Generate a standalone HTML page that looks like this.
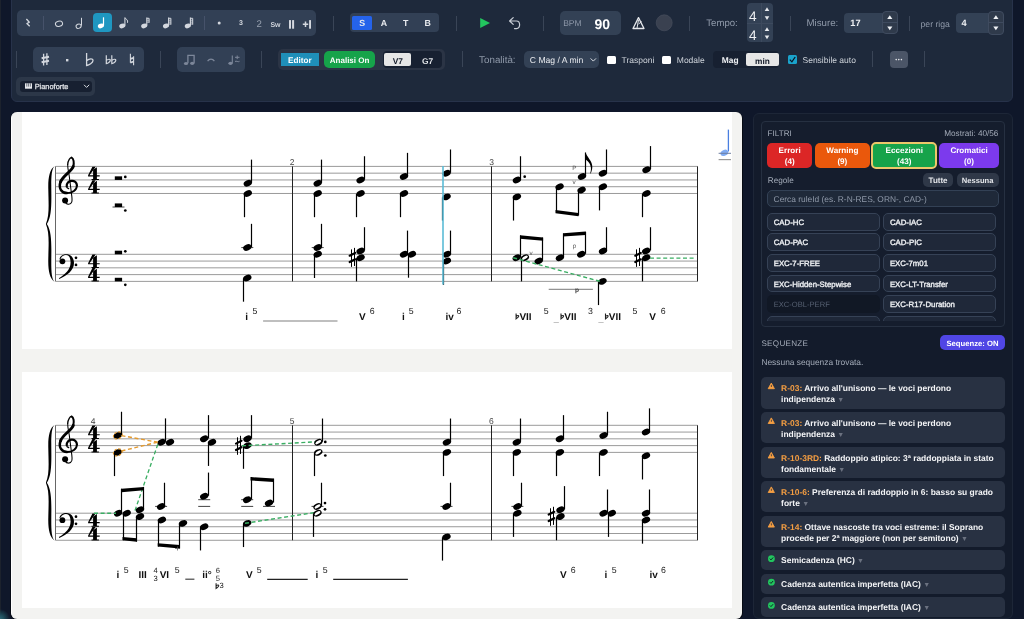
<!DOCTYPE html>
<html><head><meta charset="utf-8"><style>
html,body{margin:0;padding:0;}
body{width:1024px;height:619px;overflow:hidden;background:#0f172a;position:relative;font-family:"Liberation Sans",sans-serif;text-rendering:geometricPrecision;}
</style></head><body>
<div style="position:absolute;left:0;top:0;width:1024px;height:619px;will-change:transform">
<div style="position:absolute;left:0;top:0;width:1px;height:619px;background:#1c222d"></div><div style="position:absolute;left:0;top:606px;width:12px;height:13px;background:radial-gradient(circle at 0% 100%, #2d6878 0px, #1f4c5a 4px, rgba(15,23,42,0) 10px)"></div>
<div style="position:absolute;left:11px;top:-8px;width:1002px;height:109.8px;background:#1e293b;border-radius:6px;border:1px solid #27324a;box-sizing:border-box"></div><div style="position:absolute;left:16.5px;top:9.6px;width:299.5px;height:26.9px;background:#324055;border-radius:5px;"></div><div style="position:absolute;left:43.0px;top:16.3px;width:1px;height:13.3px;background:#46526a"></div><div style="position:absolute;left:203.8px;top:16.3px;width:1px;height:13.3px;background:#46526a"></div><div style="position:absolute;left:93px;top:13.3px;width:19px;height:19.2px;background:#1f97c1;border-radius:4px;"></div><svg style="position:absolute;left:0;top:0" width="320" height="40"><path d="M26.4,19 L29.3,22.2 L26.9,23.6 L29.7,26.2" fill="none" stroke="#d3d7de" stroke-width="1.3" stroke-linejoin="round"/><ellipse cx="59" cy="23.7" rx="3.6" ry="2.6" transform="rotate(-15 59 23.7)" fill="none" stroke="#d3d7de" stroke-width="1.1"/><ellipse cx="78.6" cy="26.2" rx="2.6" ry="2.1" transform="rotate(-25 78.6 26.2)" fill="none" stroke="#d3d7de" stroke-width="1"/><line x1="81.5" y1="17.8" x2="81.5" y2="25.6" stroke="#d3d7de" stroke-width="1"/><ellipse cx="100.9" cy="25.9" rx="3.1" ry="2.3" transform="rotate(-20 100.9 25.9)" fill="#ffffff"/><line x1="103.5" y1="17.3" x2="103.5" y2="25.5" stroke="#ffffff" stroke-width="1.2"/><ellipse cx="122.3" cy="25.9" rx="3.1" ry="2.3" transform="rotate(-20 122.3 25.9)" fill="#d3d7de"/><line x1="124.89999999999999" y1="17.5" x2="124.89999999999999" y2="25.5" stroke="#d3d7de" stroke-width="1.1"/><path d="M124.89999999999999,17.8 C125.89999999999999,19 128.39999999999998,20 127.49999999999999,22.8" fill="none" stroke="#d3d7de" stroke-width="1"/><ellipse cx="144.2" cy="25.9" rx="3.1" ry="2.3" transform="rotate(-20 144.2 25.9)" fill="#d3d7de"/><line x1="146.79999999999998" y1="17.5" x2="146.79999999999998" y2="25.5" stroke="#d3d7de" stroke-width="1.1"/><path d="M146.79999999999998,18.3 L149.1,18.3 L149.1,22.8" fill="none" stroke="#d3d7de" stroke-width="1"/><line x1="146.79999999999998" y1="20.2" x2="149.1" y2="20.2" stroke="#d3d7de" stroke-width="0.8"/><line x1="146.79999999999998" y1="22.1" x2="149.1" y2="22.1" stroke="#d3d7de" stroke-width="0.8"/><ellipse cx="166" cy="25.9" rx="3.1" ry="2.3" transform="rotate(-20 166 25.9)" fill="#d3d7de"/><line x1="168.6" y1="17.5" x2="168.6" y2="25.5" stroke="#d3d7de" stroke-width="1.1"/><path d="M168.6,18.3 L170.9,18.3 L170.9,24.7" fill="none" stroke="#d3d7de" stroke-width="1"/><line x1="168.6" y1="20.2" x2="170.9" y2="20.2" stroke="#d3d7de" stroke-width="0.8"/><line x1="168.6" y1="22.1" x2="170.9" y2="22.1" stroke="#d3d7de" stroke-width="0.8"/><line x1="168.6" y1="24.0" x2="170.9" y2="24.0" stroke="#d3d7de" stroke-width="0.8"/><ellipse cx="187.8" cy="25.9" rx="3.1" ry="2.3" transform="rotate(-20 187.8 25.9)" fill="#d3d7de"/><line x1="190.4" y1="17.5" x2="190.4" y2="25.5" stroke="#d3d7de" stroke-width="1.1"/><path d="M190.4,18.3 L192.70000000000002,18.3 L192.70000000000002,24.7" fill="none" stroke="#d3d7de" stroke-width="1"/><line x1="190.4" y1="20.2" x2="192.70000000000002" y2="20.2" stroke="#d3d7de" stroke-width="0.8"/><line x1="190.4" y1="22.1" x2="192.70000000000002" y2="22.1" stroke="#d3d7de" stroke-width="0.8"/><line x1="190.4" y1="24.0" x2="192.70000000000002" y2="24.0" stroke="#d3d7de" stroke-width="0.8"/><circle cx="219.2" cy="23.1" r="1.5" fill="#d3d7de"/><rect x="289" y="20.1" width="2" height="8.6" fill="#d3d7de"/><rect x="292.1" y="20.1" width="2" height="8.6" fill="#d3d7de"/><path d="M302.8,24.3 h5.4 M305.5,21.6 v5.4" stroke="#d3d7de" stroke-width="1.5"/><rect x="309.1" y="20.1" width="1.9" height="8.6" fill="#d3d7de"/></svg><div style="position:absolute;left:141.00px;top:19.77px;width:200px;line-height:7px;text-align:center;font-size:7px;color:#d3d7de;font-weight:bold;white-space:nowrap;">3</div><div style="position:absolute;left:159.10px;top:19.57px;width:200px;line-height:9.6px;text-align:center;font-size:9.6px;color:#98a1b0;font-weight:normal;white-space:nowrap;">2</div><div style="position:absolute;left:175.50px;top:21.87px;width:200px;line-height:7px;text-align:center;font-size:7px;color:#d3d7de;font-weight:bold;white-space:nowrap;">Sw</div><div style="position:absolute;left:333.0px;top:15.5px;width:1px;height:15.0px;background:#3a4557"></div><div style="position:absolute;left:350.3px;top:13.4px;width:89.19999999999999px;height:18.6px;background:#324055;border-radius:4px;"></div><div style="position:absolute;left:352.1px;top:15.9px;width:20.0px;height:13.999999999999998px;background:#2563eb;border-radius:1.5px;"></div><div style="position:absolute;left:262.10px;top:19.45px;width:200px;line-height:8.8px;text-align:center;font-size:8.8px;color:#e8eaee;font-weight:bold;white-space:nowrap;">S</div><div style="position:absolute;left:284.00px;top:19.45px;width:200px;line-height:8.8px;text-align:center;font-size:8.8px;color:#e8eaee;font-weight:bold;white-space:nowrap;">A</div><div style="position:absolute;left:305.70px;top:19.45px;width:200px;line-height:8.8px;text-align:center;font-size:8.8px;color:#e8eaee;font-weight:bold;white-space:nowrap;">T</div><div style="position:absolute;left:327.60px;top:19.45px;width:200px;line-height:8.8px;text-align:center;font-size:8.8px;color:#e8eaee;font-weight:bold;white-space:nowrap;">B</div><div style="position:absolute;left:456.0px;top:15.5px;width:1px;height:15.0px;background:#3a4557"></div><svg style="position:absolute;left:0;top:0" width="560" height="40"><path d="M480.2,18 L490,23 L480.2,28 Z" fill="#22c55e"/><path d="M513.2,17.6 L509.6,21 L513.2,24.4 M509.8,21 L516.5,21 C520.5,21 520.8,28.6 516.5,28.6 L514.5,28.6" fill="none" stroke="#c9ced6" stroke-width="1.2" stroke-linecap="round" stroke-linejoin="round"/></svg><div style="position:absolute;left:543.0px;top:15.5px;width:1px;height:15.0px;background:#3a4557"></div><div style="position:absolute;left:560.1px;top:11.1px;width:60.69999999999993px;height:23.9px;background:#334155;border-radius:5px;"></div><div style="position:absolute;left:563.20px;top:18.90px;line-height:8.5px;font-size:8.5px;color:#8d97a8;font-weight:normal;white-space:nowrap;">BPM</div><div style="position:absolute;left:594.40px;top:16.85px;line-height:14px;font-size:14px;color:#ffffff;font-weight:bold;white-space:nowrap;">90</div><svg style="position:absolute;left:0;top:0" width="700" height="40"><path d="M638.5,17.6 L644,28.5 L633,28.5 Z" fill="none" stroke="#e6e8ec" stroke-width="1.3" stroke-linejoin="round"/><path d="M638.5,20 L637,28 M638.6,24 L641.5,21.5" stroke="#e6e8ec" stroke-width="1"/><circle cx="664.2" cy="22.8" r="8" fill="#3a4150" stroke="#4a5060" stroke-width="0.6"/></svg><div style="position:absolute;left:688.9px;top:15.5px;width:1px;height:15.0px;background:#3a4557"></div><div style="position:absolute;left:706.30px;top:18.87px;line-height:9.6px;font-size:9.6px;color:#8f99a9;font-weight:normal;white-space:nowrap;">Tempo:</div><div style="position:absolute;left:746.5px;top:3.3px;width:26.5px;height:38.6px;background:#334155;border-radius:4px;"></div><div style="position:absolute;left:760.6px;top:3.3px;width:0.6999999999999318px;height:38.6px;background:#3d4a5e;border-radius:0px;"></div><div style="position:absolute;left:746.5px;top:22.8px;width:26.5px;height:0.6999999999999993px;background:#3d4a5e;border-radius:0px;"></div><div style="position:absolute;left:652.70px;top:9.90px;width:200px;line-height:13.7px;text-align:center;font-size:13.7px;color:#eef0f3;font-weight:normal;white-space:nowrap;">4</div><div style="position:absolute;left:652.70px;top:29.00px;width:200px;line-height:13.7px;text-align:center;font-size:13.7px;color:#eef0f3;font-weight:normal;white-space:nowrap;">4</div><svg style="position:absolute;left:0;top:0" width="1024" height="45"><path d="M764.7,11.100000000000001 L769.3,11.100000000000001 L767,7.300000000000001 Z" fill="#e8eaee"/><path d="M764.7,16.2 L769.3,16.2 L767,20.0 Z" fill="#e8eaee"/><path d="M764.7,31.0 L769.3,31.0 L767,27.2 Z" fill="#e8eaee"/><path d="M764.7,35.400000000000006 L769.3,35.400000000000006 L767,39.2 Z" fill="#e8eaee"/></svg><div style="position:absolute;left:789.5px;top:15.5px;width:1px;height:15.0px;background:#3a4557"></div><div style="position:absolute;left:806.50px;top:18.89px;line-height:9.7px;font-size:9.7px;color:#8f99a9;font-weight:normal;white-space:nowrap;">Misure:</div><div style="position:absolute;left:844.4px;top:13.1px;width:53.60000000000002px;height:19.5px;background:#334155;border-radius:4px;"></div><div style="position:absolute;left:881.8px;top:10.9px;width:16.100000000000023px;height:23.5px;background:#2f3a4b;border-radius:4px;border:0.8px solid #3f4b5f;box-sizing:border-box"></div><div style="position:absolute;left:881.8px;top:22px;width:16.100000000000023px;height:0.8000000000000007px;background:#3f4b5f;border-radius:0px;"></div><div style="position:absolute;left:850.30px;top:19.31px;line-height:9.2px;font-size:9.2px;color:#eef0f3;font-weight:bold;white-space:nowrap;">17</div><div style="position:absolute;left:909.2px;top:15.5px;width:1px;height:15.0px;background:#3a4557"></div><div style="position:absolute;left:920.50px;top:19.74px;line-height:8.7px;font-size:8.7px;color:#8f99a9;font-weight:normal;white-space:nowrap;">per riga</div><div style="position:absolute;left:955.5px;top:13.1px;width:48.5px;height:19.5px;background:#334155;border-radius:4px;"></div><div style="position:absolute;left:988.1px;top:11px;width:15.899999999999977px;height:23.9px;background:#2f3a4b;border-radius:4px;border:0.8px solid #3f4b5f;box-sizing:border-box"></div><div style="position:absolute;left:988.1px;top:22.2px;width:15.899999999999977px;height:0.8000000000000007px;background:#3f4b5f;border-radius:0px;"></div><div style="position:absolute;left:961.60px;top:19.31px;line-height:9.2px;font-size:9.2px;color:#eef0f3;font-weight:bold;white-space:nowrap;">4</div><svg style="position:absolute;left:0;top:0" width="1024" height="45"><path d="M887.1999999999999,19 L892.4,19 L889.8,15.3 Z" fill="#f0f2f5"/><path d="M887.1999999999999,26.6 L892.4,26.6 L889.8,30.3 Z" fill="#f0f2f5"/><path d="M993.3,19 L998.5,19 L995.9,15.3 Z" fill="#f0f2f5"/><path d="M993.3,26.6 L998.5,26.6 L995.9,30.3 Z" fill="#f0f2f5"/></svg><div style="position:absolute;left:15.899999999999999px;top:51px;width:1px;height:17px;background:#3a4557"></div><div style="position:absolute;left:33.1px;top:47px;width:110.70000000000002px;height:24.700000000000003px;background:#324055;border-radius:5px;"></div><div style="position:absolute;left:159.8px;top:51px;width:1px;height:17px;background:#3a4557"></div><div style="position:absolute;left:177.2px;top:47px;width:67.5px;height:24.700000000000003px;background:#324055;border-radius:5px;"></div><svg style="position:absolute;left:0;top:0" width="260" height="80"><path d="M43.6,53.8 V65.6 M46.9,53.2 V65" stroke="#d3d7de" stroke-width="1.3"/><path d="M41.6,58.3 L49,56.8 M41.6,62.2 L49,60.7" stroke="#d3d7de" stroke-width="1.9"/><rect x="66" y="59" width="2.4" height="2.4" fill="#d3d7de"/><path d="M86.6,53 V65.5 C89,65 93,63 93,60.6 C93,58.2 89.5,58.3 86.6,60.8" fill="none" stroke="#d3d7de" stroke-width="1.3"/><path d="M106.3,55.3 V63.6 C107.8,63.4 110.3,62 110.3,60.3 C110.3,58.8 108.1,59 106.3,60.5" fill="none" stroke="#d3d7de" stroke-width="1.2"/><path d="M111.8,55.3 V63.6 C113.3,63.4 115.8,62 115.8,60.3 C115.8,58.8 113.6,59 111.8,60.5" fill="none" stroke="#d3d7de" stroke-width="1.2"/><path d="M130.4,53.8 V62.8 M133.6,56.2 V65.2" stroke="#d3d7de" stroke-width="1.1"/><path d="M130.4,58.9 L133.6,57.8 M130.4,62.6 L133.6,61.5" stroke="#d3d7de" stroke-width="1.8"/><ellipse cx="186" cy="63.5" rx="2.1" ry="1.6" fill="#7d879a"/><ellipse cx="192.2" cy="63.3" rx="2.1" ry="1.6" fill="#7d879a"/><path d="M187.9,63 V55.3 H194.1 V63" fill="none" stroke="#7d879a" stroke-width="1.3"/><path d="M207.6,61.2 C209.5,58.3 212.5,58.3 214.4,61.2" fill="none" stroke="#7d879a" stroke-width="1.2"/><ellipse cx="230.5" cy="63.3" rx="2.1" ry="1.6" fill="#7d879a"/><path d="M232.3,63 V55.5" stroke="#7d879a" stroke-width="1.1"/><path d="M235,57.3 h4.5 M237.2,55.5 v3.6 M235,61.5 C236.3,60.3 238,62.6 239.5,61.3" fill="none" stroke="#7d879a" stroke-width="1"/></svg><div style="position:absolute;left:261.1px;top:51px;width:1px;height:17px;background:#3a4557"></div><div style="position:absolute;left:278.4px;top:48.8px;width:166.5px;height:21.400000000000006px;background:#2b3445;border-radius:5px;"></div><div style="position:absolute;left:280.9px;top:53.1px;width:37.80000000000001px;height:12.999999999999993px;background:#1f8fb9;border-radius:0px;"></div><div style="position:absolute;left:199.80px;top:56.56px;width:200px;line-height:8.2px;text-align:center;font-size:8.2px;color:#ffffff;font-weight:bold;white-space:nowrap;">Editor</div><div style="position:absolute;left:324px;top:50.9px;width:51.10000000000002px;height:16.9px;background:#16a34a;border-radius:5px;"></div><div style="position:absolute;left:249.60px;top:56.83px;width:200px;line-height:8px;text-align:center;font-size:8px;color:#ffffff;font-weight:bold;white-space:nowrap;">Analisi On</div><div style="position:absolute;left:382.5px;top:50.9px;width:59.80000000000001px;height:16.9px;background:#172031;border-radius:4px;"></div><div style="position:absolute;left:384.3px;top:53.2px;width:26.80000000000001px;height:12.799999999999997px;background:#e6e6e6;border-radius:2px;"></div><div style="position:absolute;left:297.80px;top:56.59px;width:200px;line-height:8.4px;text-align:center;font-size:8.4px;color:#111827;font-weight:bold;white-space:nowrap;">V7</div><div style="position:absolute;left:327.60px;top:56.59px;width:200px;line-height:8.4px;text-align:center;font-size:8.4px;color:#e5e7eb;font-weight:bold;white-space:nowrap;">G7</div><div style="position:absolute;left:461.5px;top:51.4px;width:1px;height:15.800000000000004px;background:#3a4557"></div><div style="position:absolute;left:479.10px;top:55.50px;line-height:9.8px;font-size:9.8px;color:#8f99a9;font-weight:normal;white-space:nowrap;">Tonalità:</div><div style="position:absolute;left:523.5px;top:50.9px;width:75.10000000000002px;height:16.9px;background:#334155;border-radius:5px;"></div><div style="position:absolute;left:529.80px;top:55.82px;line-height:8.6px;font-size:8.6px;color:#e9ebef;font-weight:normal;white-space:nowrap;">C Mag / A min</div><div style="position:absolute;left:607px;top:55.6px;width:8.5px;height:8.199999999999996px;background:#ffffff;border-radius:1.5px;"></div><div style="position:absolute;left:621.60px;top:56.40px;line-height:8.5px;font-size:8.5px;color:#cfd4db;font-weight:normal;white-space:nowrap;">Trasponi</div><div style="position:absolute;left:662.4px;top:55.6px;width:8.399999999999977px;height:8.199999999999996px;background:#ffffff;border-radius:1.5px;"></div><div style="position:absolute;left:676.80px;top:56.40px;line-height:8.5px;font-size:8.5px;color:#cfd4db;font-weight:normal;white-space:nowrap;">Modale</div><div style="position:absolute;left:712.5px;top:51px;width:66.79999999999995px;height:16.799999999999997px;background:#172031;border-radius:4px;"></div><div style="position:absolute;left:630.20px;top:56.49px;width:200px;line-height:8.4px;text-align:center;font-size:8.4px;color:#f0f2f5;font-weight:bold;white-space:nowrap;">Mag</div><div style="position:absolute;left:746.1px;top:53px;width:32.89999999999998px;height:12.900000000000006px;background:#e6e6e6;border-radius:2px;"></div><div style="position:absolute;left:662.50px;top:56.57px;width:200px;line-height:8.3px;text-align:center;font-size:8.3px;color:#111827;font-weight:bold;white-space:nowrap;">min</div><div style="position:absolute;left:787.6px;top:55px;width:9.600000000000023px;height:9.200000000000003px;background:#1aa3cc;border-radius:1.5px;"></div><div style="position:absolute;left:802.50px;top:56.40px;line-height:8.5px;font-size:8.5px;color:#cfd4db;font-weight:normal;white-space:nowrap;">Sensibile auto</div><div style="position:absolute;left:872.3px;top:51.4px;width:1px;height:15.800000000000004px;background:#3a4557"></div><div style="position:absolute;left:889.5px;top:51.4px;width:18.5px;height:16.4px;background:#4b5567;border-radius:4px;"></div><div style="position:absolute;left:923.8px;top:51.4px;width:1px;height:15.800000000000004px;background:#3a4557"></div><div style="position:absolute;left:16.4px;top:77px;width:78.4px;height:18.5px;background:#2c3748;border-radius:5px;"></div><div style="position:absolute;left:20px;top:80.6px;width:71.7px;height:11.400000000000006px;background:#172031;border-radius:3px;"></div><div style="position:absolute;left:34.70px;top:83.44px;line-height:7.4px;font-size:7.4px;color:#e5e7eb;font-weight:normal;white-space:nowrap;-webkit-text-stroke:0.25px #e5e7eb">Pianoforte</div><svg style="position:absolute;left:0;top:0" width="1024" height="100"><path d="M590.6,58.4 L593.3,61.1 L596,58.4" fill="none" stroke="#d9dde3" stroke-width="1"/><path d="M84,84.8 L86.6,87.4 L89.2,84.8" fill="none" stroke="#d9dde3" stroke-width="1"/><path d="M789.8,59.7 L791.9,61.9 L795.2,57" fill="none" stroke="#0b1220" stroke-width="1.2"/><circle cx="896.2" cy="59.6" r="0.8" fill="#e5e7eb"/><circle cx="898.8" cy="59.6" r="0.8" fill="#e5e7eb"/><circle cx="901.4" cy="59.6" r="0.8" fill="#e5e7eb"/><rect x="25" y="83.3" width="7" height="5.4" fill="#e5e7eb"/><path d="M26.8,83.3 V86.6 M28.6,83.3 V86.6 M30.4,83.3 V86.6" stroke="#172031" stroke-width="0.6"/></svg>
<div style="position:absolute;left:10px;top:111.5px;width:733px;height:508px;background:#070b14;border-radius:7px"></div><div style="position:absolute;left:11px;top:112px;width:731px;height:507px;background:#f3f3f1;border-radius:6px;border-left:1px solid #ffffff;box-sizing:border-box"></div>
<div style="position:absolute;left:22px;top:112px;width:710px;height:237px;background:#ffffff"></div>
<div style="position:absolute;left:22px;top:371.5px;width:710px;height:236px;background:#ffffff"></div>
<svg style="position:absolute;left:0;top:0;will-change:transform;text-rendering:geometricPrecision" width="1024" height="619" font-family="Liberation Sans, sans-serif"><line x1="55.6" y1="166.40" x2="697.6" y2="166.40" stroke="#9a9a9a" stroke-width="1"/><line x1="55.6" y1="173.17" x2="697.6" y2="173.17" stroke="#9a9a9a" stroke-width="1"/><line x1="55.6" y1="179.94" x2="697.6" y2="179.94" stroke="#9a9a9a" stroke-width="1"/><line x1="55.6" y1="186.71" x2="697.6" y2="186.71" stroke="#9a9a9a" stroke-width="1"/><line x1="55.6" y1="193.48" x2="697.6" y2="193.48" stroke="#9a9a9a" stroke-width="1"/><line x1="55.6" y1="254.30" x2="697.6" y2="254.30" stroke="#9a9a9a" stroke-width="1"/><line x1="55.6" y1="261.07" x2="697.6" y2="261.07" stroke="#9a9a9a" stroke-width="1"/><line x1="55.6" y1="267.84" x2="697.6" y2="267.84" stroke="#9a9a9a" stroke-width="1"/><line x1="55.6" y1="274.61" x2="697.6" y2="274.61" stroke="#9a9a9a" stroke-width="1"/><line x1="55.6" y1="281.38" x2="697.6" y2="281.38" stroke="#9a9a9a" stroke-width="1"/><line x1="55.50" y1="166.40" x2="55.50" y2="281.38" stroke="#666" stroke-width="1"/><path d="M54.7,165.90 C49.5,169.38 48.0,177.50 48.3,189.10 C48.6,204.75 49.5,215.19 45.9,223.89 C49.5,232.59 48.6,243.03 48.3,258.68 C48.0,270.28 49.5,278.40 54.7,281.88 C51.4,278.98 51.2,270.28 51.3,258.68 C51.5,243.03 51.6,230.85 46.9,223.89 C51.6,216.93 51.5,204.75 51.3,189.10 C51.2,177.50 51.4,168.80 54.7,165.90 Z" fill="#000000"/><g transform="translate(0.00,0.00)" fill="none" stroke="#000000" stroke-linecap="round"><path d="M65.3,201.2 C65.6,204.8 70.6,205.4 71.8,201.8 C72.3,200 71.9,196.5 71.5,193.8 L69.3,176.5 C68.8,172.5 67.6,169 67.7,164.5" stroke-width="1.05"/><path d="M67.7,164.5 C67.9,160.5 70.3,157.2 71.6,157.6" stroke-width="1.3"/><path d="M71.6,157.6 C73.6,158.4 74.3,162.5 73.3,166.4" stroke-width="2.0"/><path d="M73.3,166.4 C72,171 62.5,176 60.6,181.8" stroke-width="2.9"/><path d="M60.6,181.8 C59.6,184.5 59.4,187.5 60.8,189.8 C62.2,192 64.5,193.1 67,193.1" stroke-width="2.5"/><path d="M67,193.1 C72.4,193.1 76.9,190.2 76.9,185.5" stroke-width="1.9"/><path d="M76.9,185.5 C76.9,182.3 74.4,180.6 71.6,180.8 C68.6,181 66.5,183.4 66.7,186.3" stroke-width="2.2"/><path d="M66.7,186.3 C66.8,187.6 67.6,188.4 68.6,188.6" stroke-width="1.4"/><circle cx="65.1" cy="200.4" r="3.0" fill="#000000" stroke="none"/></g><g transform="translate(0.00,0.00)"><path d="M59.4,259.4 C60,255.6 63,254.2 66.4,254.2 C71.2,254.2 74,258.2 74,263 C74,270.3 67.2,275.4 59.3,279 L58.9,278.2 C65.3,274.3 70.6,269.4 70.6,262.5 C70.6,258.2 69.2,255.1 66,255.1 C63.6,255.1 61.6,256.3 60.7,258.7 Z" fill="#000000"/><circle cx="62.4" cy="261.3" r="2.9" fill="#000000"/><circle cx="76" cy="257.8" r="1.35" fill="#000000"/><circle cx="76" cy="264.9" r="1.35" fill="#000000"/></g><g transform="translate(88.10,166.65)"><path d="M4.3,0 L7.6,0 L1.4,8.6 L11.6,8.6 L11.6,9.8 L0,9.8 L0,8.7 Z" fill="#000000"/><path d="M5.0,3.2 L8.8,0.6 L8.8,12.4 L10.8,12.4 L10.8,13.4 L3.4,13.4 L3.4,12.4 L5.0,12.4 Z" fill="#000000"/></g><g transform="translate(88.10,180.19)"><path d="M4.3,0 L7.6,0 L1.4,8.6 L11.6,8.6 L11.6,9.8 L0,9.8 L0,8.7 Z" fill="#000000"/><path d="M5.0,3.2 L8.8,0.6 L8.8,12.4 L10.8,12.4 L10.8,13.4 L3.4,13.4 L3.4,12.4 L5.0,12.4 Z" fill="#000000"/></g><g transform="translate(88.10,254.55)"><path d="M4.3,0 L7.6,0 L1.4,8.6 L11.6,8.6 L11.6,9.8 L0,9.8 L0,8.7 Z" fill="#000000"/><path d="M5.0,3.2 L8.8,0.6 L8.8,12.4 L10.8,12.4 L10.8,13.4 L3.4,13.4 L3.4,12.4 L5.0,12.4 Z" fill="#000000"/></g><g transform="translate(88.10,268.09)"><path d="M4.3,0 L7.6,0 L1.4,8.6 L11.6,8.6 L11.6,9.8 L0,9.8 L0,8.7 Z" fill="#000000"/><path d="M5.0,3.2 L8.8,0.6 L8.8,12.4 L10.8,12.4 L10.8,13.4 L3.4,13.4 L3.4,12.4 L5.0,12.4 Z" fill="#000000"/></g><line x1="292.50" y1="166.40" x2="292.50" y2="281.38" stroke="#222" stroke-width="1"/><line x1="491.50" y1="166.40" x2="491.50" y2="281.38" stroke="#222" stroke-width="1"/><line x1="697.50" y1="166.40" x2="697.50" y2="281.38" stroke="#222" stroke-width="1"/><text x="292.20" y="165.00" font-size="8.5" fill="#444" font-weight="normal" text-anchor="middle" font-family="Liberation Sans, sans-serif">2</text><text x="491.60" y="165.00" font-size="8.5" fill="#444" font-weight="normal" text-anchor="middle" font-family="Liberation Sans, sans-serif">3</text><rect x="114.80" y="176.34" width="7.3" height="3.6" fill="#000000"/><circle cx="125.30" cy="176.90" r="1.35" fill="#000000"/><line x1="112.50" y1="207.02" x2="124.50" y2="207.02" stroke="#555" stroke-width="1.1"/><rect x="114.80" y="203.42" width="7.3" height="3.6" fill="#000000"/><circle cx="125.30" cy="210.50" r="1.35" fill="#000000"/><rect x="114.80" y="250.70" width="7.3" height="3.6" fill="#000000"/><circle cx="125.30" cy="251.30" r="1.35" fill="#000000"/><rect x="114.80" y="277.78" width="7.3" height="3.6" fill="#000000"/><circle cx="125.30" cy="284.80" r="1.35" fill="#000000"/><ellipse cx="247.80" cy="183.32" rx="4.35" ry="3.05" transform="rotate(-24 247.80 183.32)" fill="#000000"/><line x1="251.50" y1="182.82" x2="251.50" y2="159.62" stroke="#000000" stroke-width="1.2"/><ellipse cx="247.80" cy="193.48" rx="4.35" ry="3.05" transform="rotate(-24 247.80 193.48)" fill="#000000"/><line x1="244.50" y1="193.98" x2="244.50" y2="217.18" stroke="#000000" stroke-width="1.2"/><ellipse cx="317.70" cy="183.32" rx="4.35" ry="3.05" transform="rotate(-24 317.70 183.32)" fill="#000000"/><line x1="321.50" y1="182.82" x2="321.50" y2="159.62" stroke="#000000" stroke-width="1.2"/><ellipse cx="317.70" cy="193.48" rx="4.35" ry="3.05" transform="rotate(-24 317.70 193.48)" fill="#000000"/><line x1="314.50" y1="193.98" x2="314.50" y2="217.18" stroke="#000000" stroke-width="1.2"/><ellipse cx="360.60" cy="179.94" rx="4.35" ry="3.05" transform="rotate(-24 360.60 179.94)" fill="#000000"/><line x1="364.50" y1="179.44" x2="364.50" y2="156.24" stroke="#000000" stroke-width="1.2"/><ellipse cx="360.60" cy="193.48" rx="4.35" ry="3.05" transform="rotate(-24 360.60 193.48)" fill="#000000"/><line x1="356.50" y1="193.98" x2="356.50" y2="217.18" stroke="#000000" stroke-width="1.2"/><ellipse cx="404.00" cy="176.56" rx="4.35" ry="3.05" transform="rotate(-24 404.00 176.56)" fill="#000000"/><line x1="407.50" y1="176.06" x2="407.50" y2="152.86" stroke="#000000" stroke-width="1.2"/><ellipse cx="404.00" cy="193.48" rx="4.35" ry="3.05" transform="rotate(-24 404.00 193.48)" fill="#000000"/><line x1="400.50" y1="193.98" x2="400.50" y2="217.18" stroke="#000000" stroke-width="1.2"/><ellipse cx="446.60" cy="173.17" rx="4.35" ry="3.05" transform="rotate(-24 446.60 173.17)" fill="#000000"/><line x1="450.50" y1="172.67" x2="450.50" y2="149.47" stroke="#000000" stroke-width="1.2"/><ellipse cx="446.60" cy="196.87" rx="4.35" ry="3.05" transform="rotate(-24 446.60 196.87)" fill="#000000"/><line x1="442.50" y1="197.37" x2="442.50" y2="220.56" stroke="#000000" stroke-width="1.2"/><ellipse cx="516.90" cy="179.94" rx="4.35" ry="3.05" transform="rotate(-24 516.90 179.94)" fill="#000000"/><line x1="520.50" y1="179.44" x2="520.50" y2="156.24" stroke="#000000" stroke-width="1.2"/><ellipse cx="516.90" cy="196.87" rx="4.35" ry="3.05" transform="rotate(-24 516.90 196.87)" fill="#000000"/><line x1="513.50" y1="197.37" x2="513.50" y2="220.56" stroke="#000000" stroke-width="1.2"/><ellipse cx="602.90" cy="173.17" rx="4.35" ry="3.05" transform="rotate(-24 602.90 173.17)" fill="#000000"/><line x1="606.50" y1="172.67" x2="606.50" y2="149.47" stroke="#000000" stroke-width="1.2"/><ellipse cx="602.90" cy="186.71" rx="4.35" ry="3.05" transform="rotate(-24 602.90 186.71)" fill="#000000"/><line x1="599.50" y1="187.21" x2="599.50" y2="210.41" stroke="#000000" stroke-width="1.2"/><ellipse cx="646.50" cy="169.78" rx="4.35" ry="3.05" transform="rotate(-24 646.50 169.78)" fill="#000000"/><line x1="650.50" y1="169.28" x2="650.50" y2="146.09" stroke="#000000" stroke-width="1.2"/><ellipse cx="646.50" cy="193.48" rx="4.35" ry="3.05" transform="rotate(-24 646.50 193.48)" fill="#000000"/><line x1="642.50" y1="193.98" x2="642.50" y2="217.18" stroke="#000000" stroke-width="1.2"/><circle cx="524.70" cy="176.70" r="1.35" fill="#000000"/><ellipse cx="582.00" cy="176.56" rx="4.35" ry="3.05" transform="rotate(-24 582.00 176.56)" fill="#000000"/><line x1="585.50" y1="176.06" x2="585.50" y2="152.56" stroke="#000000" stroke-width="1.2"/><path d="M585.5,151.8 C586.4,157.3 592.9,160.8 592.3,167.6 C592.1,170 591.5,172 590.7,173.6 L590.1,173.4 C590.8,171.6 591.1,169.6 590.9,167.8 C590.5,163 587.6,161 585.5,159.2 Z" fill="#000000"/><text x="574.30" y="170.30" font-size="6.3" fill="#555" font-weight="normal" text-anchor="middle" font-family="Liberation Sans, sans-serif">P</text><text x="574.20" y="183.80" font-size="6.3" fill="#555" font-weight="normal" text-anchor="middle" font-family="Liberation Sans, sans-serif">v</text><ellipse cx="559.60" cy="186.71" rx="4.35" ry="3.05" transform="rotate(-24 559.60 186.71)" fill="#000000"/><ellipse cx="581.60" cy="190.09" rx="4.35" ry="3.05" transform="rotate(-24 581.60 190.09)" fill="#000000"/><line x1="556.50" y1="187.21" x2="556.50" y2="212.50" stroke="#000000" stroke-width="1.2"/><line x1="578.50" y1="190.59" x2="578.50" y2="215.50" stroke="#000000" stroke-width="1.2"/><path d="M555.50,209.90 L578.50,212.90 L578.50,216.30 L555.50,213.30 Z" fill="#000000"/><line x1="241.30" y1="247.53" x2="253.30" y2="247.53" stroke="#555" stroke-width="1.1"/><ellipse cx="247.30" cy="247.53" rx="4.35" ry="3.05" transform="rotate(-24 247.30 247.53)" fill="#000000"/><line x1="251.50" y1="247.03" x2="251.50" y2="223.83" stroke="#000000" stroke-width="1.2"/><ellipse cx="247.30" cy="278.00" rx="4.35" ry="3.05" transform="rotate(-24 247.30 278.00)" fill="#000000"/><line x1="243.50" y1="278.50" x2="243.50" y2="301.69" stroke="#000000" stroke-width="1.2"/><line x1="311.70" y1="247.53" x2="323.70" y2="247.53" stroke="#555" stroke-width="1.1"/><ellipse cx="317.70" cy="247.53" rx="4.35" ry="3.05" transform="rotate(-24 317.70 247.53)" fill="#000000"/><line x1="321.50" y1="247.03" x2="321.50" y2="223.83" stroke="#000000" stroke-width="1.2"/><ellipse cx="317.70" cy="254.30" rx="4.35" ry="3.05" transform="rotate(-24 317.70 254.30)" fill="#000000"/><line x1="314.50" y1="254.80" x2="314.50" y2="278.00" stroke="#000000" stroke-width="1.2"/><ellipse cx="360.60" cy="250.92" rx="4.35" ry="3.05" transform="rotate(-24 360.60 250.92)" fill="#000000"/><line x1="364.50" y1="250.42" x2="364.50" y2="227.22" stroke="#000000" stroke-width="1.2"/><ellipse cx="360.60" cy="257.69" rx="4.35" ry="3.05" transform="rotate(-24 360.60 257.69)" fill="#000000"/><line x1="356.50" y1="258.19" x2="356.50" y2="281.38" stroke="#000000" stroke-width="1.2"/><line x1="351.50" y1="249.38" x2="351.50" y2="266.88" stroke="#000000" stroke-width="1.0"/><line x1="354.50" y1="247.88" x2="354.50" y2="265.99" stroke="#000000" stroke-width="1.0"/><path d="M349.70,255.69 L355.20,252.88" stroke="#000000" stroke-width="2.2" stroke-linecap="round"/><path d="M349.70,262.08 L355.20,259.29" stroke="#000000" stroke-width="2.2" stroke-linecap="round"/><ellipse cx="404.00" cy="254.30" rx="4.35" ry="3.05" transform="rotate(-24 404.00 254.30)" fill="#000000"/><line x1="407.50" y1="253.80" x2="407.50" y2="230.60" stroke="#000000" stroke-width="1.2"/><ellipse cx="411.90" cy="254.30" rx="4.35" ry="3.05" transform="rotate(-24 411.90 254.30)" fill="#000000"/><line x1="408.50" y1="254.80" x2="408.50" y2="277.70" stroke="#000000" stroke-width="1.2"/><!-- fix stem of unison --><ellipse cx="446.90" cy="254.30" rx="4.35" ry="3.05" transform="rotate(-24 446.90 254.30)" fill="#000000"/><line x1="450.50" y1="253.80" x2="450.50" y2="230.60" stroke="#000000" stroke-width="1.2"/><ellipse cx="446.90" cy="261.07" rx="4.35" ry="3.05" transform="rotate(-24 446.90 261.07)" fill="#000000"/><line x1="443.50" y1="261.57" x2="443.50" y2="284.77" stroke="#000000" stroke-width="1.2"/><ellipse cx="516.70" cy="257.69" rx="4.35" ry="3.05" transform="rotate(-24 516.70 257.69)" fill="#000000"/><ellipse cx="538.70" cy="261.07" rx="4.35" ry="3.05" transform="rotate(-24 538.70 261.07)" fill="#000000"/><ellipse cx="559.90" cy="257.69" rx="4.35" ry="3.05" transform="rotate(-24 559.90 257.69)" fill="#000000"/><ellipse cx="581.20" cy="254.30" rx="4.35" ry="3.05" transform="rotate(-24 581.20 254.30)" fill="#000000"/><line x1="520.50" y1="257.19" x2="520.50" y2="235.50" stroke="#000000" stroke-width="1.2"/><line x1="542.50" y1="260.57" x2="542.50" y2="237.60" stroke="#000000" stroke-width="1.2"/><path d="M520.00,235.30 L543.10,237.40 L543.10,240.80 L520.00,238.70 Z" fill="#000000"/><line x1="563.50" y1="257.19" x2="563.50" y2="233.40" stroke="#000000" stroke-width="1.2"/><line x1="585.50" y1="253.80" x2="585.50" y2="231.80" stroke="#000000" stroke-width="1.2"/><path d="M563.20,233.20 L585.70,231.60 L585.70,235.00 L563.20,236.60 Z" fill="#000000"/><text x="574.40" y="247.60" font-size="6.3" fill="#555" font-weight="normal" text-anchor="middle" font-family="Liberation Sans, sans-serif">p</text><text x="531.10" y="254.60" font-size="6.3" fill="#555" font-weight="normal" text-anchor="middle" font-family="Liberation Sans, sans-serif">v</text><ellipse cx="524.90" cy="257.69" rx="4.35" ry="3.05" transform="rotate(-24 524.90 257.69)" fill="#000000"/><ellipse cx="524.90" cy="257.69" rx="3.3" ry="1.35" transform="rotate(-33 524.90 257.69)" fill="#ffffff"/><line x1="521.50" y1="258.19" x2="521.50" y2="281.40" stroke="#000000" stroke-width="1.2"/><ellipse cx="603.00" cy="250.92" rx="4.35" ry="3.05" transform="rotate(-24 603.00 250.92)" fill="#000000"/><line x1="606.50" y1="250.42" x2="606.50" y2="227.22" stroke="#000000" stroke-width="1.2"/><ellipse cx="602.50" cy="281.38" rx="4.35" ry="3.05" transform="rotate(-24 602.50 281.38)" fill="#000000"/><line x1="598.50" y1="281.88" x2="598.50" y2="305.08" stroke="#000000" stroke-width="1.2"/><ellipse cx="646.20" cy="250.92" rx="4.35" ry="3.05" transform="rotate(-24 646.20 250.92)" fill="#000000"/><line x1="650.50" y1="250.42" x2="650.50" y2="227.22" stroke="#000000" stroke-width="1.2"/><ellipse cx="646.20" cy="257.69" rx="4.35" ry="3.05" transform="rotate(-24 646.20 257.69)" fill="#000000"/><line x1="642.50" y1="258.19" x2="642.50" y2="281.38" stroke="#000000" stroke-width="1.2"/><line x1="636.50" y1="249.38" x2="636.50" y2="266.88" stroke="#000000" stroke-width="1.0"/><line x1="639.50" y1="247.88" x2="639.50" y2="265.99" stroke="#000000" stroke-width="1.0"/><path d="M635.30,255.69 L640.80,252.88" stroke="#000000" stroke-width="2.2" stroke-linecap="round"/><path d="M635.30,262.08 L640.80,259.29" stroke="#000000" stroke-width="2.2" stroke-linecap="round"/><line x1="548.7" y1="289.3" x2="592.9" y2="289.3" stroke="#555" stroke-width="0.8"/><text x="577.10" y="291.60" font-size="6.5" fill="#333" font-weight="bold" text-anchor="middle" font-family="Liberation Sans, sans-serif">p</text><path d="M513.20,257.70 L599.80,281.30" fill="none" stroke="#3aae63" stroke-width="1.4" stroke-dasharray="4 2.6"/><path d="M650.00,258.10 L694.00,258.10" fill="none" stroke="#3aae63" stroke-width="1.4" stroke-dasharray="4 2.6"/><line x1="443" y1="165.9" x2="443" y2="284.5" stroke="#5bbcd6" stroke-width="1.6"/><line x1="728.4" y1="129.6" x2="728.4" y2="151.5" stroke="#4a7fe0" stroke-width="1.3"/><ellipse cx="724.3" cy="152.8" rx="4" ry="2.9" transform="rotate(-24 724.3 152.8)" fill="#6a9cf0" opacity="0.85"/><line x1="718.6" y1="153.3" x2="731" y2="153.3" stroke="#6e7fa0" stroke-width="1"/><line x1="718.6" y1="159.6" x2="731" y2="159.6" stroke="#9a9a9a" stroke-width="1.2"/><text x="245.20" y="319.50" font-size="10" fill="#111" font-weight="bold" text-anchor="start" font-family="Liberation Sans, sans-serif">i</text><text x="252.40" y="314.30" font-size="8.8" fill="#222" font-weight="normal" text-anchor="start" font-family="Liberation Sans, sans-serif">5</text><line x1="263.1" y1="321" x2="337.5" y2="321" stroke="#aaa" stroke-width="1.5"/><text x="359.00" y="319.50" font-size="10" fill="#111" font-weight="bold" text-anchor="start" font-family="Liberation Sans, sans-serif">V</text><text x="369.80" y="314.30" font-size="8.8" fill="#222" font-weight="normal" text-anchor="start" font-family="Liberation Sans, sans-serif">6</text><text x="401.90" y="319.50" font-size="10" fill="#111" font-weight="bold" text-anchor="start" font-family="Liberation Sans, sans-serif">i</text><text x="408.70" y="314.30" font-size="8.8" fill="#222" font-weight="normal" text-anchor="start" font-family="Liberation Sans, sans-serif">5</text><text x="445.40" y="319.50" font-size="10" fill="#111" font-weight="bold" text-anchor="start" font-family="Liberation Sans, sans-serif">iv</text><text x="456.50" y="314.30" font-size="8.8" fill="#222" font-weight="normal" text-anchor="start" font-family="Liberation Sans, sans-serif">6</text><path d="M516.10,313.53 L516.10,318.80 C517.47,317.78 518.92,316.93 518.75,316.00 C518.58,315.15 517.30,315.23 516.10,316.59" fill="none" stroke="#222" stroke-width="1.10"/><text x="519.40" y="319.50" font-size="10" fill="#111" font-weight="bold" text-anchor="start" font-family="Liberation Sans, sans-serif">VII</text><text x="543.80" y="314.20" font-size="8.8" fill="#222" font-weight="normal" text-anchor="start" font-family="Liberation Sans, sans-serif">5</text><text x="553.80" y="320.80" font-size="9" fill="#999" font-weight="normal" text-anchor="start" font-family="Liberation Sans, sans-serif">_</text><path d="M561.00,313.53 L561.00,318.80 C562.37,317.78 563.82,316.93 563.64,316.00 C563.48,315.15 562.20,315.23 561.00,316.59" fill="none" stroke="#222" stroke-width="1.10"/><text x="564.30" y="319.50" font-size="10" fill="#111" font-weight="bold" text-anchor="start" font-family="Liberation Sans, sans-serif">VII</text><text x="588.10" y="314.20" font-size="8.8" fill="#222" font-weight="normal" text-anchor="start" font-family="Liberation Sans, sans-serif">3</text><text x="598.60" y="320.80" font-size="9" fill="#999" font-weight="normal" text-anchor="start" font-family="Liberation Sans, sans-serif">_</text><path d="M605.50,313.53 L605.50,318.80 C606.87,317.78 608.32,316.93 608.14,316.00 C607.98,315.15 606.70,315.23 605.50,316.59" fill="none" stroke="#222" stroke-width="1.10"/><text x="608.80" y="319.50" font-size="10" fill="#111" font-weight="bold" text-anchor="start" font-family="Liberation Sans, sans-serif">VII</text><text x="632.60" y="314.20" font-size="8.8" fill="#222" font-weight="normal" text-anchor="start" font-family="Liberation Sans, sans-serif">5</text><text x="649.30" y="319.50" font-size="10" fill="#111" font-weight="bold" text-anchor="start" font-family="Liberation Sans, sans-serif">V</text><text x="660.80" y="314.30" font-size="8.8" fill="#222" font-weight="normal" text-anchor="start" font-family="Liberation Sans, sans-serif">6</text><line x1="55.6" y1="425.30" x2="697.6" y2="425.30" stroke="#9a9a9a" stroke-width="1"/><line x1="55.6" y1="432.07" x2="697.6" y2="432.07" stroke="#9a9a9a" stroke-width="1"/><line x1="55.6" y1="438.84" x2="697.6" y2="438.84" stroke="#9a9a9a" stroke-width="1"/><line x1="55.6" y1="445.61" x2="697.6" y2="445.61" stroke="#9a9a9a" stroke-width="1"/><line x1="55.6" y1="452.38" x2="697.6" y2="452.38" stroke="#9a9a9a" stroke-width="1"/><line x1="55.6" y1="513.20" x2="697.6" y2="513.20" stroke="#9a9a9a" stroke-width="1"/><line x1="55.6" y1="519.97" x2="697.6" y2="519.97" stroke="#9a9a9a" stroke-width="1"/><line x1="55.6" y1="526.74" x2="697.6" y2="526.74" stroke="#9a9a9a" stroke-width="1"/><line x1="55.6" y1="533.51" x2="697.6" y2="533.51" stroke="#9a9a9a" stroke-width="1"/><line x1="55.6" y1="540.28" x2="697.6" y2="540.28" stroke="#9a9a9a" stroke-width="1"/><line x1="55.50" y1="425.30" x2="55.50" y2="540.28" stroke="#666" stroke-width="1"/><path d="M54.7,424.80 C49.5,428.28 48.0,436.40 48.3,448.00 C48.6,463.65 49.5,474.09 45.9,482.79 C49.5,491.49 48.6,501.93 48.3,517.58 C48.0,529.18 49.5,537.30 54.7,540.78 C51.4,537.88 51.2,529.18 51.3,517.58 C51.5,501.93 51.6,489.75 46.9,482.79 C51.6,475.83 51.5,463.65 51.3,448.00 C51.2,436.40 51.4,427.70 54.7,424.80 Z" fill="#000000"/><g transform="translate(0.00,258.90)" fill="none" stroke="#000000" stroke-linecap="round"><path d="M65.3,201.2 C65.6,204.8 70.6,205.4 71.8,201.8 C72.3,200 71.9,196.5 71.5,193.8 L69.3,176.5 C68.8,172.5 67.6,169 67.7,164.5" stroke-width="1.05"/><path d="M67.7,164.5 C67.9,160.5 70.3,157.2 71.6,157.6" stroke-width="1.3"/><path d="M71.6,157.6 C73.6,158.4 74.3,162.5 73.3,166.4" stroke-width="2.0"/><path d="M73.3,166.4 C72,171 62.5,176 60.6,181.8" stroke-width="2.9"/><path d="M60.6,181.8 C59.6,184.5 59.4,187.5 60.8,189.8 C62.2,192 64.5,193.1 67,193.1" stroke-width="2.5"/><path d="M67,193.1 C72.4,193.1 76.9,190.2 76.9,185.5" stroke-width="1.9"/><path d="M76.9,185.5 C76.9,182.3 74.4,180.6 71.6,180.8 C68.6,181 66.5,183.4 66.7,186.3" stroke-width="2.2"/><path d="M66.7,186.3 C66.8,187.6 67.6,188.4 68.6,188.6" stroke-width="1.4"/><circle cx="65.1" cy="200.4" r="3.0" fill="#000000" stroke="none"/></g><g transform="translate(0.00,258.90)"><path d="M59.4,259.4 C60,255.6 63,254.2 66.4,254.2 C71.2,254.2 74,258.2 74,263 C74,270.3 67.2,275.4 59.3,279 L58.9,278.2 C65.3,274.3 70.6,269.4 70.6,262.5 C70.6,258.2 69.2,255.1 66,255.1 C63.6,255.1 61.6,256.3 60.7,258.7 Z" fill="#000000"/><circle cx="62.4" cy="261.3" r="2.9" fill="#000000"/><circle cx="76" cy="257.8" r="1.35" fill="#000000"/><circle cx="76" cy="264.9" r="1.35" fill="#000000"/></g><g transform="translate(88.10,425.55)"><path d="M4.3,0 L7.6,0 L1.4,8.6 L11.6,8.6 L11.6,9.8 L0,9.8 L0,8.7 Z" fill="#000000"/><path d="M5.0,3.2 L8.8,0.6 L8.8,12.4 L10.8,12.4 L10.8,13.4 L3.4,13.4 L3.4,12.4 L5.0,12.4 Z" fill="#000000"/></g><g transform="translate(88.10,439.09)"><path d="M4.3,0 L7.6,0 L1.4,8.6 L11.6,8.6 L11.6,9.8 L0,9.8 L0,8.7 Z" fill="#000000"/><path d="M5.0,3.2 L8.8,0.6 L8.8,12.4 L10.8,12.4 L10.8,13.4 L3.4,13.4 L3.4,12.4 L5.0,12.4 Z" fill="#000000"/></g><g transform="translate(88.10,513.45)"><path d="M4.3,0 L7.6,0 L1.4,8.6 L11.6,8.6 L11.6,9.8 L0,9.8 L0,8.7 Z" fill="#000000"/><path d="M5.0,3.2 L8.8,0.6 L8.8,12.4 L10.8,12.4 L10.8,13.4 L3.4,13.4 L3.4,12.4 L5.0,12.4 Z" fill="#000000"/></g><g transform="translate(88.10,526.99)"><path d="M4.3,0 L7.6,0 L1.4,8.6 L11.6,8.6 L11.6,9.8 L0,9.8 L0,8.7 Z" fill="#000000"/><path d="M5.0,3.2 L8.8,0.6 L8.8,12.4 L10.8,12.4 L10.8,13.4 L3.4,13.4 L3.4,12.4 L5.0,12.4 Z" fill="#000000"/></g><line x1="292.50" y1="425.30" x2="292.50" y2="540.28" stroke="#222" stroke-width="1"/><line x1="491.50" y1="425.30" x2="491.50" y2="540.28" stroke="#222" stroke-width="1"/><line x1="697.50" y1="425.30" x2="697.50" y2="540.28" stroke="#222" stroke-width="1"/><text x="93.10" y="423.50" font-size="8.5" fill="#444" font-weight="normal" text-anchor="middle" font-family="Liberation Sans, sans-serif">4</text><text x="292.20" y="423.50" font-size="8.5" fill="#444" font-weight="normal" text-anchor="middle" font-family="Liberation Sans, sans-serif">5</text><text x="491.40" y="423.50" font-size="8.5" fill="#444" font-weight="normal" text-anchor="middle" font-family="Liberation Sans, sans-serif">6</text><ellipse cx="117.80" cy="435.45" rx="4.35" ry="3.05" transform="rotate(-24 117.80 435.45)" fill="#000000"/><ellipse cx="117.80" cy="435.45" rx="4.6" ry="3.3" transform="rotate(-24 117.80 435.45)" fill="none" stroke="#e49a2e" stroke-width="1.1" stroke-dasharray="2.5 1.5"/><line x1="121.50" y1="434.95" x2="121.50" y2="411.75" stroke="#000000" stroke-width="1.2"/><ellipse cx="117.80" cy="452.38" rx="4.35" ry="3.05" transform="rotate(-24 117.80 452.38)" fill="#000000"/><ellipse cx="117.80" cy="452.38" rx="4.6" ry="3.3" transform="rotate(-24 117.80 452.38)" fill="none" stroke="#e49a2e" stroke-width="1.1" stroke-dasharray="2.5 1.5"/><line x1="114.50" y1="452.88" x2="114.50" y2="476.08" stroke="#000000" stroke-width="1.2"/><ellipse cx="161.60" cy="442.23" rx="4.35" ry="3.05" transform="rotate(-24 161.60 442.23)" fill="#000000"/><ellipse cx="170.00" cy="442.23" rx="4.35" ry="3.05" transform="rotate(-24 170.00 442.23)" fill="#000000"/><line x1="165.50" y1="441.73" x2="165.50" y2="418.40" stroke="#000000" stroke-width="1.2"/><ellipse cx="204.20" cy="438.84" rx="4.35" ry="3.05" transform="rotate(-24 204.20 438.84)" fill="#000000"/><line x1="208.50" y1="438.34" x2="208.50" y2="415.14" stroke="#000000" stroke-width="1.2"/><ellipse cx="212.00" cy="442.23" rx="4.35" ry="3.05" transform="rotate(-24 212.00 442.23)" fill="#000000"/><line x1="208.50" y1="442.73" x2="208.50" y2="465.93" stroke="#000000" stroke-width="1.2"/><ellipse cx="247.50" cy="438.84" rx="4.35" ry="3.05" transform="rotate(-24 247.50 438.84)" fill="#000000"/><line x1="251.50" y1="438.34" x2="251.50" y2="415.14" stroke="#000000" stroke-width="1.2"/><ellipse cx="247.50" cy="445.61" rx="4.35" ry="3.05" transform="rotate(-24 247.50 445.61)" fill="#000000"/><line x1="243.50" y1="446.11" x2="243.50" y2="468.81" stroke="#000000" stroke-width="1.2"/><line x1="237.50" y1="437.31" x2="237.50" y2="454.81" stroke="#000000" stroke-width="1.0"/><line x1="240.50" y1="435.81" x2="240.50" y2="453.91" stroke="#000000" stroke-width="1.0"/><path d="M236.00,443.61 L241.50,440.81" stroke="#000000" stroke-width="2.2" stroke-linecap="round"/><path d="M236.00,450.01 L241.50,447.21" stroke="#000000" stroke-width="2.2" stroke-linecap="round"/><ellipse cx="318.30" cy="442.23" rx="4.35" ry="3.05" transform="rotate(-24 318.30 442.23)" fill="#000000"/><ellipse cx="318.30" cy="442.23" rx="3.3" ry="1.35" transform="rotate(-33 318.30 442.23)" fill="#ffffff"/><line x1="322.50" y1="441.73" x2="322.50" y2="418.53" stroke="#000000" stroke-width="1.2"/><circle cx="325.30" cy="441.90" r="1.35" fill="#000000"/><ellipse cx="318.30" cy="452.38" rx="4.35" ry="3.05" transform="rotate(-24 318.30 452.38)" fill="#000000"/><ellipse cx="318.30" cy="452.38" rx="3.3" ry="1.35" transform="rotate(-33 318.30 452.38)" fill="#ffffff"/><line x1="314.50" y1="452.88" x2="314.50" y2="476.08" stroke="#000000" stroke-width="1.2"/><circle cx="325.30" cy="455.50" r="1.35" fill="#000000"/><ellipse cx="446.90" cy="442.23" rx="4.35" ry="3.05" transform="rotate(-24 446.90 442.23)" fill="#000000"/><line x1="450.50" y1="441.73" x2="450.50" y2="418.53" stroke="#000000" stroke-width="1.2"/><ellipse cx="446.90" cy="452.38" rx="4.35" ry="3.05" transform="rotate(-24 446.90 452.38)" fill="#000000"/><line x1="443.50" y1="452.88" x2="443.50" y2="476.08" stroke="#000000" stroke-width="1.2"/><ellipse cx="516.80" cy="442.23" rx="4.35" ry="3.05" transform="rotate(-24 516.80 442.23)" fill="#000000"/><line x1="520.50" y1="441.73" x2="520.50" y2="418.53" stroke="#000000" stroke-width="1.2"/><ellipse cx="516.80" cy="452.38" rx="4.35" ry="3.05" transform="rotate(-24 516.80 452.38)" fill="#000000"/><line x1="513.50" y1="452.88" x2="513.50" y2="476.08" stroke="#000000" stroke-width="1.2"/><ellipse cx="559.90" cy="438.84" rx="4.35" ry="3.05" transform="rotate(-24 559.90 438.84)" fill="#000000"/><line x1="563.50" y1="438.34" x2="563.50" y2="415.14" stroke="#000000" stroke-width="1.2"/><ellipse cx="559.90" cy="452.38" rx="4.35" ry="3.05" transform="rotate(-24 559.90 452.38)" fill="#000000"/><line x1="556.50" y1="452.88" x2="556.50" y2="476.08" stroke="#000000" stroke-width="1.2"/><ellipse cx="603.60" cy="435.45" rx="4.35" ry="3.05" transform="rotate(-24 603.60 435.45)" fill="#000000"/><line x1="607.50" y1="434.95" x2="607.50" y2="411.75" stroke="#000000" stroke-width="1.2"/><ellipse cx="603.60" cy="452.38" rx="4.35" ry="3.05" transform="rotate(-24 603.60 452.38)" fill="#000000"/><line x1="599.50" y1="452.88" x2="599.50" y2="476.08" stroke="#000000" stroke-width="1.2"/><ellipse cx="646.00" cy="432.07" rx="4.35" ry="3.05" transform="rotate(-24 646.00 432.07)" fill="#000000"/><line x1="649.50" y1="431.57" x2="649.50" y2="408.37" stroke="#000000" stroke-width="1.2"/><ellipse cx="646.00" cy="455.76" rx="4.35" ry="3.05" transform="rotate(-24 646.00 455.76)" fill="#000000"/><line x1="642.50" y1="456.26" x2="642.50" y2="479.46" stroke="#000000" stroke-width="1.2"/><path d="M121.50,435.60 L157.50,442.20" fill="none" stroke="#e49a2e" stroke-width="1.4" stroke-dasharray="4 2.6"/><path d="M121.50,451.00 L157.50,442.20" fill="none" stroke="#e49a2e" stroke-width="1.4" stroke-dasharray="4 2.6"/><path d="M135.00,510.50 L158.40,442.60" fill="none" stroke="#3aae63" stroke-width="1.3" stroke-dasharray="4 2.6"/><path d="M242.00,445.80 L315.00,441.90" fill="none" stroke="#3aae63" stroke-width="1.4" stroke-dasharray="4 2.6"/><ellipse cx="118.10" cy="513.20" rx="4.35" ry="3.05" transform="rotate(-24 118.10 513.20)" fill="#000000"/><ellipse cx="126.70" cy="513.20" rx="4.35" ry="3.05" transform="rotate(-24 126.70 513.20)" fill="#000000"/><line x1="121.50" y1="512.70" x2="121.50" y2="488.70" stroke="#000000" stroke-width="1.2"/><ellipse cx="140.00" cy="509.82" rx="4.35" ry="3.05" transform="rotate(-24 140.00 509.82)" fill="#000000"/><line x1="143.50" y1="509.32" x2="143.50" y2="486.90" stroke="#000000" stroke-width="1.2"/><path d="M121.40,488.75 L144.00,486.90 L144.00,490.30 L121.40,492.15 Z" fill="#000000"/><ellipse cx="140.00" cy="516.59" rx="4.35" ry="3.05" transform="rotate(-24 140.00 516.59)" fill="#000000"/><line x1="123.50" y1="513.70" x2="123.50" y2="540.20" stroke="#000000" stroke-width="1.2"/><line x1="136.50" y1="517.09" x2="136.50" y2="541.60" stroke="#000000" stroke-width="1.2"/><path d="M122.50,536.90 L136.90,538.30 L136.90,541.70 L122.50,540.30 Z" fill="#000000"/><path d="M94.00,513.20 L116.00,513.20" fill="none" stroke="#3aae63" stroke-width="1.4" stroke-dasharray="4 2.6"/><line x1="155.10" y1="506.43" x2="167.10" y2="506.43" stroke="#555" stroke-width="1.1"/><ellipse cx="161.10" cy="506.43" rx="4.35" ry="3.05" transform="rotate(-24 161.10 506.43)" fill="#000000"/><line x1="164.50" y1="505.93" x2="164.50" y2="482.73" stroke="#000000" stroke-width="1.2"/><ellipse cx="161.90" cy="519.97" rx="4.35" ry="3.05" transform="rotate(-24 161.90 519.97)" fill="#000000"/><ellipse cx="183.00" cy="523.36" rx="4.35" ry="3.05" transform="rotate(-24 183.00 523.36)" fill="#000000"/><line x1="158.50" y1="520.47" x2="158.50" y2="546.60" stroke="#000000" stroke-width="1.2"/><line x1="179.50" y1="523.86" x2="179.50" y2="548.50" stroke="#000000" stroke-width="1.2"/><path d="M157.70,543.20 L179.80,545.10 L179.80,548.50 L157.70,546.60 Z" fill="#000000"/><path d="M175,548.5 h5 M177.5,546.5 v4" stroke="#555" stroke-width="0.7"/><line x1="198.20" y1="506.43" x2="210.20" y2="506.43" stroke="#555" stroke-width="1.1"/><line x1="198.20" y1="499.66" x2="210.20" y2="499.66" stroke="#555" stroke-width="1.1"/><ellipse cx="204.20" cy="496.28" rx="4.35" ry="3.05" transform="rotate(-24 204.20 496.28)" fill="#000000"/><line x1="208.50" y1="495.78" x2="208.50" y2="472.58" stroke="#000000" stroke-width="1.2"/><ellipse cx="204.20" cy="526.74" rx="4.35" ry="3.05" transform="rotate(-24 204.20 526.74)" fill="#000000"/><line x1="200.50" y1="527.24" x2="200.50" y2="550.44" stroke="#000000" stroke-width="1.2"/><line x1="241.20" y1="506.43" x2="253.20" y2="506.43" stroke="#555" stroke-width="1.1"/><line x1="241.20" y1="499.66" x2="253.20" y2="499.66" stroke="#555" stroke-width="1.1"/><ellipse cx="247.20" cy="499.66" rx="4.35" ry="3.05" transform="rotate(-24 247.20 499.66)" fill="#000000"/><line x1="263.00" y1="506.43" x2="275.00" y2="506.43" stroke="#555" stroke-width="1.1"/><ellipse cx="269.00" cy="503.05" rx="4.35" ry="3.05" transform="rotate(-24 269.00 503.05)" fill="#000000"/><line x1="251.50" y1="499.16" x2="251.50" y2="477.00" stroke="#000000" stroke-width="1.2"/><line x1="273.50" y1="502.55" x2="273.50" y2="478.60" stroke="#000000" stroke-width="1.2"/><path d="M250.50,477.00 L273.60,478.60 L273.60,482.00 L250.50,480.40 Z" fill="#000000"/><ellipse cx="247.20" cy="523.36" rx="4.35" ry="3.05" transform="rotate(-24 247.20 523.36)" fill="#000000"/><line x1="243.50" y1="523.86" x2="243.50" y2="547.06" stroke="#000000" stroke-width="1.2"/><path d="M245.00,523.30 L315.00,512.50" fill="none" stroke="#3aae63" stroke-width="1.4" stroke-dasharray="4 2.6"/><line x1="311.50" y1="506.43" x2="323.50" y2="506.43" stroke="#555" stroke-width="1.1"/><ellipse cx="317.50" cy="506.43" rx="4.35" ry="3.05" transform="rotate(-24 317.50 506.43)" fill="#000000"/><ellipse cx="317.50" cy="506.43" rx="3.3" ry="1.35" transform="rotate(-33 317.50 506.43)" fill="#ffffff"/><line x1="321.50" y1="505.93" x2="321.50" y2="482.73" stroke="#000000" stroke-width="1.2"/><circle cx="325.00" cy="503.10" r="1.35" fill="#000000"/><ellipse cx="317.50" cy="513.20" rx="4.35" ry="3.05" transform="rotate(-24 317.50 513.20)" fill="#000000"/><ellipse cx="317.50" cy="513.20" rx="3.3" ry="1.35" transform="rotate(-33 317.50 513.20)" fill="#ffffff"/><line x1="313.50" y1="513.70" x2="313.50" y2="536.90" stroke="#000000" stroke-width="1.2"/><circle cx="325.00" cy="509.30" r="1.35" fill="#000000"/><line x1="440.50" y1="506.43" x2="452.50" y2="506.43" stroke="#555" stroke-width="1.1"/><ellipse cx="446.50" cy="506.43" rx="4.35" ry="3.05" transform="rotate(-24 446.50 506.43)" fill="#000000"/><line x1="450.50" y1="505.93" x2="450.50" y2="482.73" stroke="#000000" stroke-width="1.2"/><ellipse cx="446.50" cy="536.90" rx="4.35" ry="3.05" transform="rotate(-24 446.50 536.90)" fill="#000000"/><line x1="442.50" y1="537.40" x2="442.50" y2="560.60" stroke="#000000" stroke-width="1.2"/><line x1="511.40" y1="506.43" x2="523.40" y2="506.43" stroke="#555" stroke-width="1.1"/><ellipse cx="517.40" cy="506.43" rx="4.35" ry="3.05" transform="rotate(-24 517.40 506.43)" fill="#000000"/><line x1="521.50" y1="505.93" x2="521.50" y2="482.73" stroke="#000000" stroke-width="1.2"/><ellipse cx="517.40" cy="513.20" rx="4.35" ry="3.05" transform="rotate(-24 517.40 513.20)" fill="#000000"/><line x1="513.50" y1="513.70" x2="513.50" y2="536.90" stroke="#000000" stroke-width="1.2"/><ellipse cx="560.50" cy="509.82" rx="4.35" ry="3.05" transform="rotate(-24 560.50 509.82)" fill="#000000"/><line x1="564.50" y1="509.32" x2="564.50" y2="486.12" stroke="#000000" stroke-width="1.2"/><ellipse cx="560.50" cy="516.59" rx="4.35" ry="3.05" transform="rotate(-24 560.50 516.59)" fill="#000000"/><line x1="556.50" y1="517.09" x2="556.50" y2="540.29" stroke="#000000" stroke-width="1.2"/><line x1="550.50" y1="508.29" x2="550.50" y2="525.79" stroke="#000000" stroke-width="1.0"/><line x1="553.50" y1="506.79" x2="553.50" y2="524.88" stroke="#000000" stroke-width="1.0"/><path d="M548.70,514.59 L554.20,511.79" stroke="#000000" stroke-width="2.2" stroke-linecap="round"/><path d="M548.70,520.99 L554.20,518.19" stroke="#000000" stroke-width="2.2" stroke-linecap="round"/><ellipse cx="603.60" cy="513.20" rx="4.35" ry="3.05" transform="rotate(-24 603.60 513.20)" fill="#000000"/><line x1="607.50" y1="512.70" x2="607.50" y2="489.50" stroke="#000000" stroke-width="1.2"/><ellipse cx="611.80" cy="513.20" rx="4.35" ry="3.05" transform="rotate(-24 611.80 513.20)" fill="#000000"/><line x1="608.50" y1="513.70" x2="608.50" y2="536.90" stroke="#000000" stroke-width="1.2"/><ellipse cx="646.00" cy="513.20" rx="4.35" ry="3.05" transform="rotate(-24 646.00 513.20)" fill="#000000"/><line x1="649.50" y1="512.70" x2="649.50" y2="489.50" stroke="#000000" stroke-width="1.2"/><ellipse cx="646.00" cy="519.97" rx="4.35" ry="3.05" transform="rotate(-24 646.00 519.97)" fill="#000000"/><line x1="642.50" y1="520.47" x2="642.50" y2="543.67" stroke="#000000" stroke-width="1.2"/><text x="116.40" y="578.00" font-size="10" fill="#111" font-weight="bold" text-anchor="start" font-family="Liberation Sans, sans-serif">i</text><text x="123.80" y="572.70" font-size="8.8" fill="#222" font-weight="normal" text-anchor="start" font-family="Liberation Sans, sans-serif">5</text><text x="138.50" y="578.00" font-size="10" fill="#111" font-weight="bold" text-anchor="start" font-family="Liberation Sans, sans-serif">III</text><text x="153.40" y="572.80" font-size="7.6" fill="#222" font-weight="normal" text-anchor="start" font-family="Liberation Sans, sans-serif">4</text><text x="153.40" y="581.10" font-size="7.6" fill="#222" font-weight="normal" text-anchor="start" font-family="Liberation Sans, sans-serif">3</text><text x="159.70" y="578.00" font-size="10" fill="#111" font-weight="bold" text-anchor="start" font-family="Liberation Sans, sans-serif">VI</text><text x="174.80" y="572.70" font-size="8.8" fill="#222" font-weight="normal" text-anchor="start" font-family="Liberation Sans, sans-serif">5</text><line x1="185.3" y1="579.2" x2="194.4" y2="579.2" stroke="#444" stroke-width="1.2"/><text x="202.20" y="578.00" font-size="10" fill="#111" font-weight="bold" text-anchor="start" font-family="Liberation Sans, sans-serif">ii°</text><text x="215.70" y="572.80" font-size="7.6" fill="#222" font-weight="normal" text-anchor="start" font-family="Liberation Sans, sans-serif">6</text><text x="215.70" y="581.10" font-size="7.6" fill="#222" font-weight="normal" text-anchor="start" font-family="Liberation Sans, sans-serif">5</text><path d="M216.10,583.13 L216.10,588.40 C217.47,587.38 218.91,586.53 218.75,585.60 C218.57,584.75 217.30,584.83 216.10,586.19" fill="none" stroke="#222" stroke-width="1.10"/><text x="219.50" y="588.40" font-size="7.6" fill="#222" font-weight="normal" text-anchor="start" font-family="Liberation Sans, sans-serif">3</text><text x="246.10" y="578.20" font-size="10" fill="#111" font-weight="bold" text-anchor="start" font-family="Liberation Sans, sans-serif">V</text><text x="256.80" y="572.70" font-size="8.8" fill="#222" font-weight="normal" text-anchor="start" font-family="Liberation Sans, sans-serif">5</text><line x1="267.2" y1="579.3" x2="307.7" y2="579.3" stroke="#222" stroke-width="1.2"/><text x="315.60" y="578.20" font-size="10" fill="#111" font-weight="bold" text-anchor="start" font-family="Liberation Sans, sans-serif">i</text><text x="322.80" y="572.70" font-size="8.8" fill="#222" font-weight="normal" text-anchor="start" font-family="Liberation Sans, sans-serif">5</text><line x1="333.2" y1="579.3" x2="407.9" y2="579.3" stroke="#222" stroke-width="1.2"/><text x="559.90" y="578.20" font-size="10" fill="#111" font-weight="bold" text-anchor="start" font-family="Liberation Sans, sans-serif">V</text><text x="570.80" y="572.90" font-size="8.8" fill="#222" font-weight="normal" text-anchor="start" font-family="Liberation Sans, sans-serif">6</text><text x="604.60" y="578.20" font-size="10" fill="#111" font-weight="bold" text-anchor="start" font-family="Liberation Sans, sans-serif">i</text><text x="611.70" y="572.90" font-size="8.8" fill="#222" font-weight="normal" text-anchor="start" font-family="Liberation Sans, sans-serif">5</text><text x="649.50" y="578.20" font-size="10" fill="#111" font-weight="bold" text-anchor="start" font-family="Liberation Sans, sans-serif">iv</text><text x="660.90" y="572.90" font-size="8.8" fill="#222" font-weight="normal" text-anchor="start" font-family="Liberation Sans, sans-serif">6</text></svg>
<div style="position:absolute;left:753px;top:112.8px;width:259.5px;height:506.7px;background:#131b2b;border-radius:6px;border:1px solid #1d2637;box-sizing:border-box"></div><div style="position:absolute;left:761.3px;top:121px;width:243.5px;height:205.5px;background:#151d2d;border-radius:4px;border:1px solid #263041;box-sizing:border-box"></div><div style="position:absolute;left:767.60px;top:129.64px;line-height:8.1px;font-size:8.1px;color:#a3abb8;font-weight:normal;white-space:nowrap;">FILTRI</div><div style="position:absolute;right:25.60px;top:129.56px;line-height:8.2px;text-align:right;font-size:8.2px;color:#a3abb8;font-weight:normal;white-space:nowrap;">Mostrati: 40/56</div><div style="position:absolute;left:767.3px;top:143.2px;width:44.700000000000045px;height:24.80000000000001px;background:#dc2626;border-radius:5px;"></div><div style="position:absolute;left:689.65px;top:147.24px;width:200px;line-height:8.1px;text-align:center;font-size:8.1px;color:#ffffff;font-weight:bold;white-space:nowrap;">Errori</div><div style="position:absolute;left:689.65px;top:158.24px;width:200px;line-height:8.1px;text-align:center;font-size:8.1px;color:#ffffff;font-weight:bold;white-space:nowrap;">(4)</div><div style="position:absolute;left:815.1px;top:143.2px;width:54.5px;height:24.80000000000001px;background:#ea580c;border-radius:5px;"></div><div style="position:absolute;left:742.35px;top:147.24px;width:200px;line-height:8.1px;text-align:center;font-size:8.1px;color:#ffffff;font-weight:bold;white-space:nowrap;">Warning</div><div style="position:absolute;left:742.35px;top:158.24px;width:200px;line-height:8.1px;text-align:center;font-size:8.1px;color:#ffffff;font-weight:bold;white-space:nowrap;">(9)</div><div style="position:absolute;left:871.2px;top:142.2px;width:66.09999999999991px;height:26.700000000000017px;background:#16a34a;border-radius:5px;border:2px solid #ecc86a;box-sizing:border-box"></div><div style="position:absolute;left:804.25px;top:147.24px;width:200px;line-height:8.1px;text-align:center;font-size:8.1px;color:#ffffff;font-weight:bold;white-space:nowrap;">Eccezioni</div><div style="position:absolute;left:804.25px;top:158.24px;width:200px;line-height:8.1px;text-align:center;font-size:8.1px;color:#ffffff;font-weight:bold;white-space:nowrap;">(43)</div><div style="position:absolute;left:939.2px;top:143.2px;width:59.69999999999993px;height:24.80000000000001px;background:#7c3aed;border-radius:5px;"></div><div style="position:absolute;left:869.05px;top:147.24px;width:200px;line-height:8.1px;text-align:center;font-size:8.1px;color:#ffffff;font-weight:bold;white-space:nowrap;">Cromatici</div><div style="position:absolute;left:869.05px;top:158.24px;width:200px;line-height:8.1px;text-align:center;font-size:8.1px;color:#ffffff;font-weight:bold;white-space:nowrap;">(0)</div><div style="position:absolute;left:767.80px;top:176.86px;line-height:8.2px;font-size:8.2px;color:#a3abb8;font-weight:normal;white-space:nowrap;">Regole</div><div style="position:absolute;left:923.2px;top:172.9px;width:29.799999999999955px;height:14.299999999999983px;background:#2f3848;border-radius:5px;"></div><div style="position:absolute;left:838.10px;top:176.93px;width:200px;line-height:8px;text-align:center;font-size:8px;color:#e5e7eb;font-weight:bold;white-space:nowrap;">Tutte</div><div style="position:absolute;left:956.6px;top:172.9px;width:42.0px;height:14.299999999999983px;background:#2f3848;border-radius:5px;"></div><div style="position:absolute;left:877.60px;top:177.27px;width:200px;line-height:7.6px;text-align:center;font-size:7.6px;color:#e5e7eb;font-weight:bold;white-space:nowrap;">Nessuna</div><div style="position:absolute;left:767.3px;top:190px;width:231.5px;height:17.30000000000001px;background:#1f2939;border-radius:5px;border:1px solid #334155;box-sizing:border-box"></div><div style="position:absolute;left:773.60px;top:195.29px;line-height:8.4px;font-size:8.4px;color:#8f99a9;font-weight:normal;white-space:nowrap;">Cerca ruleId (es. R-N-RES, ORN-, CAD-)</div><div style="position:absolute;left:0;top:0;width:1024px;height:321px;overflow:hidden"><div style="position:absolute;left:767.2px;top:212.9px;width:113.09999999999991px;height:17.80000000000001px;background:#1f2839;border-radius:5px;border:1px solid #364256;box-sizing:border-box"></div><div style="position:absolute;left:773.70px;top:218.80px;line-height:7.8px;font-size:7.8px;color:#eef0f3;font-weight:normal;white-space:nowrap;-webkit-text-stroke:0.35px #eef0f3">CAD-HC</div><div style="position:absolute;left:883.4px;top:212.9px;width:112.5px;height:17.80000000000001px;background:#1f2839;border-radius:5px;border:1px solid #364256;box-sizing:border-box"></div><div style="position:absolute;left:889.90px;top:218.80px;line-height:7.8px;font-size:7.8px;color:#eef0f3;font-weight:normal;white-space:nowrap;-webkit-text-stroke:0.35px #eef0f3">CAD-IAC</div><div style="position:absolute;left:767.2px;top:233.4px;width:113.09999999999991px;height:17.80000000000001px;background:#1f2839;border-radius:5px;border:1px solid #364256;box-sizing:border-box"></div><div style="position:absolute;left:773.70px;top:239.30px;line-height:7.8px;font-size:7.8px;color:#eef0f3;font-weight:normal;white-space:nowrap;-webkit-text-stroke:0.35px #eef0f3">CAD-PAC</div><div style="position:absolute;left:883.4px;top:233.4px;width:112.5px;height:17.80000000000001px;background:#1f2839;border-radius:5px;border:1px solid #364256;box-sizing:border-box"></div><div style="position:absolute;left:889.90px;top:239.30px;line-height:7.8px;font-size:7.8px;color:#eef0f3;font-weight:normal;white-space:nowrap;-webkit-text-stroke:0.35px #eef0f3">CAD-PIC</div><div style="position:absolute;left:767.2px;top:254px;width:113.09999999999991px;height:17.80000000000001px;background:#1f2839;border-radius:5px;border:1px solid #364256;box-sizing:border-box"></div><div style="position:absolute;left:773.70px;top:259.90px;line-height:7.8px;font-size:7.8px;color:#eef0f3;font-weight:normal;white-space:nowrap;-webkit-text-stroke:0.35px #eef0f3">EXC-7-FREE</div><div style="position:absolute;left:883.4px;top:254px;width:112.5px;height:17.80000000000001px;background:#1f2839;border-radius:5px;border:1px solid #364256;box-sizing:border-box"></div><div style="position:absolute;left:889.90px;top:259.90px;line-height:7.8px;font-size:7.8px;color:#eef0f3;font-weight:normal;white-space:nowrap;-webkit-text-stroke:0.35px #eef0f3">EXC-7m01</div><div style="position:absolute;left:767.2px;top:274.6px;width:113.09999999999991px;height:17.80000000000001px;background:#1f2839;border-radius:5px;border:1px solid #364256;box-sizing:border-box"></div><div style="position:absolute;left:773.70px;top:280.50px;line-height:7.8px;font-size:7.8px;color:#eef0f3;font-weight:normal;white-space:nowrap;-webkit-text-stroke:0.35px #eef0f3">EXC-Hidden-Stepwise</div><div style="position:absolute;left:883.4px;top:274.6px;width:112.5px;height:17.80000000000001px;background:#1f2839;border-radius:5px;border:1px solid #364256;box-sizing:border-box"></div><div style="position:absolute;left:889.90px;top:280.50px;line-height:7.8px;font-size:7.8px;color:#eef0f3;font-weight:normal;white-space:nowrap;-webkit-text-stroke:0.35px #eef0f3">EXC-LT-Transfer</div><div style="position:absolute;left:767.2px;top:295.3px;width:113.09999999999991px;height:17.80000000000001px;background:#111825;border-radius:5px;"></div><div style="position:absolute;left:773.70px;top:301.37px;line-height:7.6px;font-size:7.6px;color:#566072;font-weight:normal;white-space:nowrap;">EXC-OBL-PERF</div><div style="position:absolute;left:883.4px;top:295.3px;width:112.5px;height:17.80000000000001px;background:#1f2839;border-radius:5px;border:1px solid #364256;box-sizing:border-box"></div><div style="position:absolute;left:889.90px;top:301.20px;line-height:7.8px;font-size:7.8px;color:#eef0f3;font-weight:normal;white-space:nowrap;-webkit-text-stroke:0.35px #eef0f3">EXC-R17-Duration</div><div style="position:absolute;left:767.2px;top:316px;width:113.09999999999991px;height:17.80000000000001px;background:#1f2839;border-radius:5px;border:1px solid #364256;box-sizing:border-box"></div><div style="position:absolute;left:883.4px;top:316px;width:112.5px;height:17.80000000000001px;background:#1f2839;border-radius:5px;border:1px solid #364256;box-sizing:border-box"></div></div><div style="position:absolute;left:761.40px;top:340.04px;line-height:8.1px;font-size:8.1px;color:#a3abb8;font-weight:normal;white-space:nowrap;letter-spacing:0.3px">SEQUENZE</div><div style="position:absolute;left:940.2px;top:335px;width:64.69999999999993px;height:15.300000000000011px;background:#5046e5;border-radius:5px;"></div><div style="position:absolute;left:872.50px;top:339.98px;width:200px;line-height:7.7px;text-align:center;font-size:7.7px;color:#ffffff;font-weight:bold;white-space:nowrap;">Sequenze: ON</div><div style="position:absolute;left:761.40px;top:357.89px;line-height:8.4px;font-size:8.4px;color:#a3abb8;font-weight:normal;white-space:nowrap;">Nessuna sequenza trovata.</div><div style="position:absolute;left:761.2px;top:377.2px;width:243.69999999999993px;height:31.80000000000001px;background:#283142;border-radius:5px;"></div><div style="position:absolute;left:781.10px;top:384.35px;line-height:8.45px;font-size:8.45px;color:#f3f4f6;font-weight:bold;white-space:nowrap;"><span style="color:#f59e42">R-03:</span> Arrivo all'unisono — le voci perdono</div><div style="position:absolute;left:781.10px;top:395.35px;line-height:8.45px;font-size:8.45px;color:#f3f4f6;font-weight:bold;white-space:nowrap;">indipendenza <span style="color:#6b7280;font-size:7px">▼</span></div><div style="position:absolute;left:761.2px;top:412px;width:243.69999999999993px;height:31px;background:#283142;border-radius:5px;"></div><div style="position:absolute;left:781.10px;top:419.15px;line-height:8.45px;font-size:8.45px;color:#f3f4f6;font-weight:bold;white-space:nowrap;"><span style="color:#f59e42">R-03:</span> Arrivo all'unisono — le voci perdono</div><div style="position:absolute;left:781.10px;top:430.15px;line-height:8.45px;font-size:8.45px;color:#f3f4f6;font-weight:bold;white-space:nowrap;">indipendenza <span style="color:#6b7280;font-size:7px">▼</span></div><div style="position:absolute;left:761.2px;top:446.5px;width:243.69999999999993px;height:31.100000000000023px;background:#283142;border-radius:5px;"></div><div style="position:absolute;left:781.10px;top:453.65px;line-height:8.45px;font-size:8.45px;color:#f3f4f6;font-weight:bold;white-space:nowrap;"><span style="color:#f59e42">R-10-3RD:</span> Raddoppio atipico: 3ª raddoppiata in stato</div><div style="position:absolute;left:781.10px;top:464.65px;line-height:8.45px;font-size:8.45px;color:#f3f4f6;font-weight:bold;white-space:nowrap;">fondamentale <span style="color:#6b7280;font-size:7px">▼</span></div><div style="position:absolute;left:761.2px;top:481px;width:243.69999999999993px;height:31.100000000000023px;background:#283142;border-radius:5px;"></div><div style="position:absolute;left:781.10px;top:488.15px;line-height:8.45px;font-size:8.45px;color:#f3f4f6;font-weight:bold;white-space:nowrap;"><span style="color:#f59e42">R-10-6:</span> Preferenza di raddoppio in 6: basso su grado</div><div style="position:absolute;left:781.10px;top:499.15px;line-height:8.45px;font-size:8.45px;color:#f3f4f6;font-weight:bold;white-space:nowrap;">forte <span style="color:#6b7280;font-size:7px">▼</span></div><div style="position:absolute;left:761.2px;top:515.6px;width:243.69999999999993px;height:31.100000000000023px;background:#283142;border-radius:5px;"></div><div style="position:absolute;left:781.10px;top:522.75px;line-height:8.45px;font-size:8.45px;color:#f3f4f6;font-weight:bold;white-space:nowrap;"><span style="color:#f59e42">R-14:</span> Ottave nascoste tra voci estreme: il Soprano</div><div style="position:absolute;left:781.10px;top:533.75px;line-height:8.45px;font-size:8.45px;color:#f3f4f6;font-weight:bold;white-space:nowrap;">procede per 2ª maggiore (non per semitono) <span style="color:#6b7280;font-size:7px">▼</span></div><div style="position:absolute;left:761.2px;top:550px;width:243.69999999999993px;height:20.399999999999977px;background:#283142;border-radius:5px;"></div><div style="position:absolute;left:781.10px;top:556.25px;line-height:8.45px;font-size:8.45px;color:#f3f4f6;font-weight:bold;white-space:nowrap;">Semicadenza (HC) <span style="color:#6b7280;font-size:7px">▼</span></div><div style="position:absolute;left:761.2px;top:573.5px;width:243.69999999999993px;height:20.5px;background:#283142;border-radius:5px;"></div><div style="position:absolute;left:781.10px;top:579.75px;line-height:8.45px;font-size:8.45px;color:#f3f4f6;font-weight:bold;white-space:nowrap;">Cadenza autentica imperfetta (IAC) <span style="color:#6b7280;font-size:7px">▼</span></div><div style="position:absolute;left:761.2px;top:596.7px;width:243.69999999999993px;height:20.09999999999991px;background:#283142;border-radius:5px;"></div><div style="position:absolute;left:781.10px;top:602.95px;line-height:8.45px;font-size:8.45px;color:#f3f4f6;font-weight:bold;white-space:nowrap;">Cadenza autentica imperfetta (IAC) <span style="color:#6b7280;font-size:7px">▼</span></div><svg style="position:absolute;left:0;top:0" width="1024" height="619"><path d="M771.3,383.1 L774.4,388.7 L768.2,388.7 Z" fill="#f59e42" stroke="#f59e42" stroke-width="0.9" stroke-linejoin="round"/><rect x="770.9" y="384.9" width="0.8" height="2.1" fill="#283142"/><path d="M771.3,417.90000000000003 L774.4,423.5 L768.2,423.5 Z" fill="#f59e42" stroke="#f59e42" stroke-width="0.9" stroke-linejoin="round"/><rect x="770.9" y="419.7" width="0.8" height="2.1" fill="#283142"/><path d="M771.3,452.40000000000003 L774.4,458.0 L768.2,458.0 Z" fill="#f59e42" stroke="#f59e42" stroke-width="0.9" stroke-linejoin="round"/><rect x="770.9" y="454.2" width="0.8" height="2.1" fill="#283142"/><path d="M771.3,486.90000000000003 L774.4,492.5 L768.2,492.5 Z" fill="#f59e42" stroke="#f59e42" stroke-width="0.9" stroke-linejoin="round"/><rect x="770.9" y="488.7" width="0.8" height="2.1" fill="#283142"/><path d="M771.3,521.5 L774.4,527.1 L768.2,527.1 Z" fill="#f59e42" stroke="#f59e42" stroke-width="0.9" stroke-linejoin="round"/><rect x="770.9" y="523.3" width="0.8" height="2.1" fill="#283142"/><circle cx="771.4" cy="558.7" r="3.4" fill="#22c55e"/><path d="M769.8,558.7 L771,559.9000000000001 L773.1,557.5" fill="none" stroke="#0b1220" stroke-width="0.9"/><circle cx="771.4" cy="582.2" r="3.4" fill="#22c55e"/><path d="M769.8,582.2 L771,583.4000000000001 L773.1,581.0" fill="none" stroke="#0b1220" stroke-width="0.9"/><circle cx="771.4" cy="605.4000000000001" r="3.4" fill="#22c55e"/><path d="M769.8,605.4000000000001 L771,606.6000000000001 L773.1,604.2" fill="none" stroke="#0b1220" stroke-width="0.9"/></svg>
</div>
</body></html>
